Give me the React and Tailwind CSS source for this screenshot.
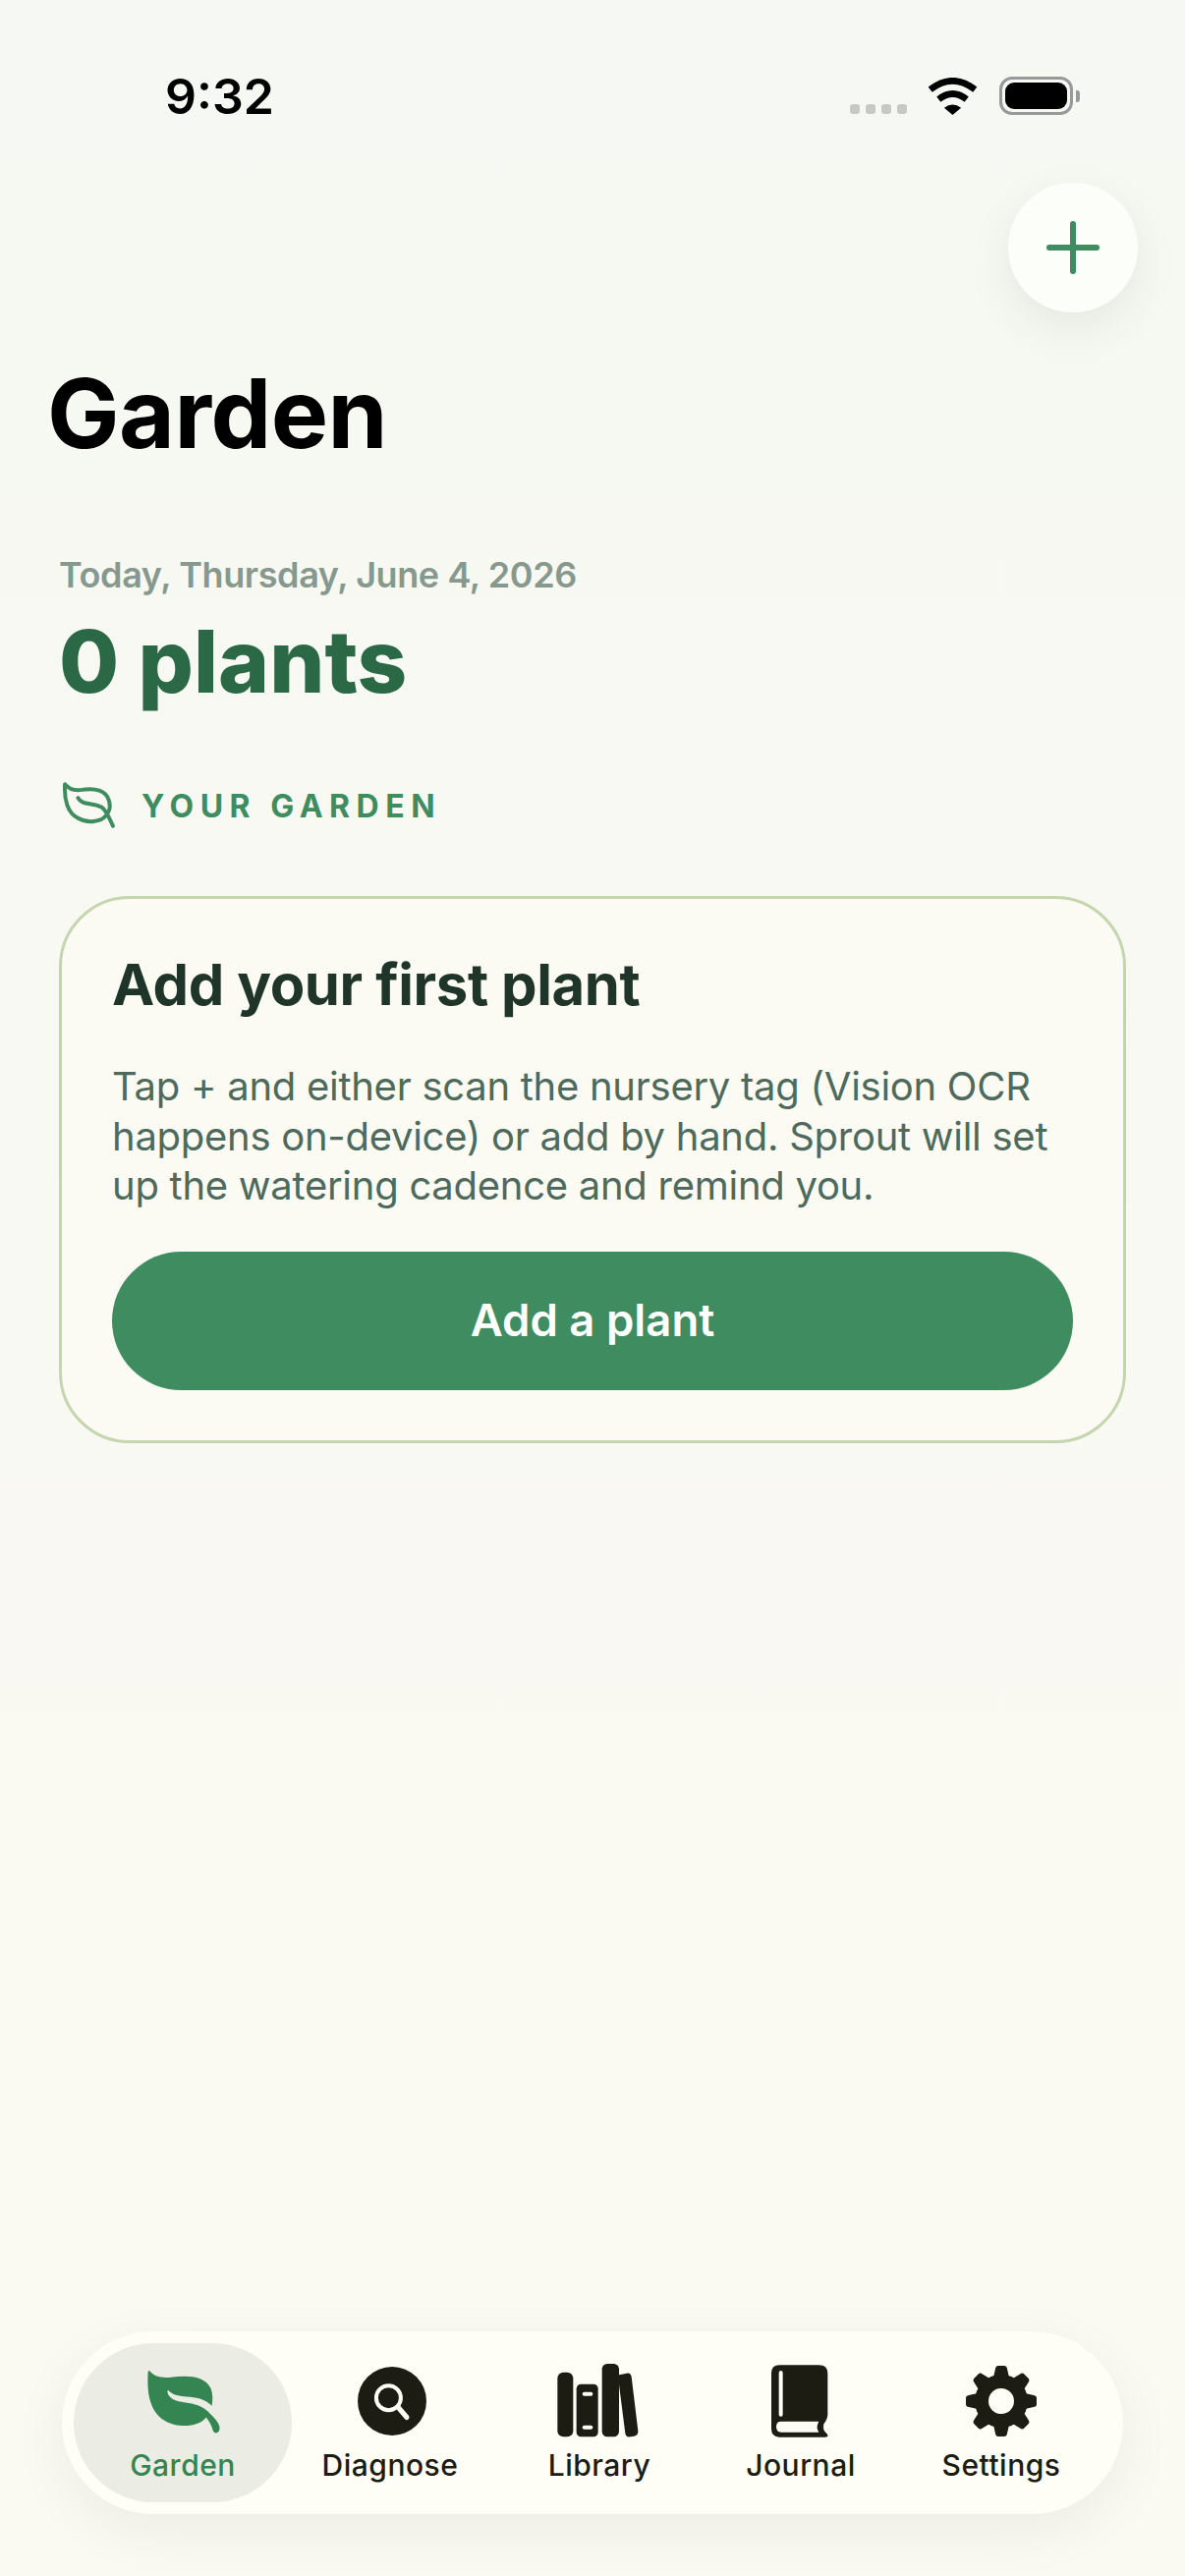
const tabs = [
    { label: "Garden", icon: <GardenIcon />, active: true },
    { label: "Diagnose", icon: <DiagnoseIcon /> },
    { label: "Library", icon: <LibraryIcon /> },
    { label: "Journal", icon: <JournalIcon /> },
    { label: "Settings", icon: <SettingsIcon /> },
];

function GardenIcon() {
    return (
        <svg viewBox="300 185 220 200" preserveAspectRatio="none" className="h-[67px] w-[79px]">
            <path
                fill="#358552"
                d="M315 192 C325 207 345 214 375 211 C420 205 470 205 488 245 C494 262 494 280 491 298 C470 275 445 272 420 270 C395 268 380 265 367 250 C362 255 368 272 385 280 C410 292 450 285 480 315 C495 332 515 350 513 368 C512 382 498 385 494 372 C490 355 483 345 475 333 C455 360 415 362 385 355 C330 340 305 290 310 200 C310 192 313 190 315 192 Z"
            />
        </svg>
    );
}

function DiagnoseIcon() {
    return (
        <svg viewBox="-35 -35 70 70" className="h-[70px] w-[70px] translate-x-[2px]">
            <circle r="35" fill="#1c1c12" />
            <circle cx="-3.6" cy="-3.3" r="12.5" fill="none" stroke="#fefef6" strokeWidth="4" />
            <path d="M6 6 L15 16.5" stroke="#fefef6" strokeWidth="5" strokeLinecap="round" />
        </svg>
    );
}

function LibraryIcon() {
    return (
        <svg viewBox="0 0 330 300" className="h-[100px] w-[110px] -translate-x-[5px]">
            <rect x="52" y="62" width="48" height="197" rx="18" fill="#1c1c12" />
            <rect x="110" y="98" width="66" height="161" rx="14" fill="#1c1c12" />
            <rect x="128" y="122" width="32" height="12" rx="6" fill="#fefef6" />
            <rect x="128" y="224" width="32" height="12" rx="6" fill="#fefef6" />
            <rect x="188" y="36" width="52" height="223" rx="16" fill="#1c1c12" />
            <path
                fill="#1c1c12"
                d="M240 70 L264 65 C272 64 277 68 278 76 L298 240 C299 250 295 255 286 257 L274 259 C265 260 260 256 259 248 L240 100 Z"
            />
        </svg>
    );
}

function JournalIcon() {
    return (
        <svg viewBox="0 0 300 270" className="h-[90px] w-[100px] translate-x-[5px]">
            <path
                fill="#1c1c12"
                d="M45 50 Q45 25 70 25 L190 25 Q217 25 217 50 L217 175 Q217 190 205 205 Q200 225 215 235 Q222 245 210 245 L70 245 Q45 245 45 220 Z"
            />
            <rect x="68" y="42" width="12" height="140" rx="6" fill="#fefef6" />
            <path
                fill="#fefef6"
                d="M75 197 L190 197 Q180 215 190 230 L75 230 Q60 230 60 213 Q60 197 75 197 Z"
            />
        </svg>
    );
}

function SettingsIcon() {
    return (
        <svg viewBox="-37 -37 74 74" className="h-[74px] w-[74px]">
            <circle r="27" fill="#1c1c12" />
            {[0, 45, 90, 135, 180, 225, 270, 315].map((deg) => (
                <path
                    key={deg}
                    transform={`rotate(${deg})`}
                    d="M-8 -24 L-6 -33 Q-5.5 -36 -3 -36 L3 -36 Q5.5 -36 6 -33 L8 -24 Z"
                    fill="#1c1c12"
                />
            ))}
            <circle r="13" fill="#fefef6" />
        </svg>
    );
}

function StatusBar() {
    return (
        <div className="flex h-[186px] items-start pt-[70px] pl-[168px] pr-[107px]">
            <span className="text-[50px] leading-[56px] font-semibold text-black">9:32</span>
            <div className="ml-auto flex items-start pt-[8px]">
                <div className="mt-[28px] flex gap-[6px]">
                    <span className="h-[10px] w-[10px] rounded-[3px] bg-[#c8c9c4]" />
                    <span className="h-[10px] w-[10px] rounded-[3px] bg-[#c8c9c4]" />
                    <span className="h-[10px] w-[10px] rounded-[3px] bg-[#c8c9c4]" />
                    <span className="h-[10px] w-[10px] rounded-[3px] bg-[#c8c9c4]" />
                </div>
                <svg viewBox="315 85 155 115" className="ml-[21px] mt-[1px] h-[38px] w-[52px]">
                    <path d="M322 122 Q391 68 460 122" fill="none" stroke="#000" strokeWidth="20" />
                    <path d="M348 152 Q391 118 434 152" fill="none" stroke="#000" strokeWidth="20" />
                    <path d="M365 178 Q391 158 417 178 L391 200 Z" fill="#000" />
                </svg>
                <div className="ml-[21px] flex items-center">
                    <div className="h-[39px] w-[75px] rounded-[13px] border-[3px] border-[#999] p-[3px]">
                        <div className="h-full w-full rounded-[9px] bg-black" />
                    </div>
                    <div className="ml-[3px] h-[12px] w-[4px] rounded-r-[3px] bg-[#999]" />
                </div>
            </div>
        </div>
    );
}

export default function App() {
    return (
        <div className="flex h-[2622px] w-[1206px] flex-col overflow-hidden bg-gradient-to-b from-[#f6f8f3] to-[#fbfaf2] font-[Inter,sans-serif]">
            <StatusBar />

            <div className="flex justify-end pr-[48px]">
                <button className="flex h-[132px] w-[132px] items-center justify-center rounded-full bg-[#fcfef9] shadow-[0_16px_50px_rgba(0,0,0,0.07)]">
                    <svg viewBox="0 0 54 54" className="h-[54px] w-[54px]">
                        <path d="M27 3 V51 M3 27 H51" stroke="#3e8c60" strokeWidth="6" strokeLinecap="round" />
                    </svg>
                </button>
            </div>

            <h1 className="mt-[48px] pl-[48px] text-[98px] leading-[110px] font-bold tracking-[-0.5px] text-black">Garden</h1>

            <div className="mt-[87px] px-[60px]">
                <p className="text-[36px] leading-[44px] font-semibold tracking-[-0.4px] text-[#87988d]">Today, Thursday, June 4, 2026</p>
                <p className="mt-[16px] text-[88.5px] leading-[100px] font-extrabold text-[#2a6846]">0 plants</p>

                <div className="mt-[66px] flex items-center">
                    <svg viewBox="0 0 240 190" className="h-[63px] w-[80px] -ml-[10px] -translate-y-[9px]">
                        <path
                            d="M48 55 C60 70 80 75 100 72 C140 65 175 75 183 105 C188 125 186 135 175 150 C160 172 115 175 90 160 C55 145 45 100 48 55 Z M88 97 C100 120 130 110 160 125 C175 135 185 160 195 183"
                            fill="none"
                            stroke="#3e8c60"
                            strokeWidth="12"
                            strokeLinecap="round"
                            strokeLinejoin="round"
                        />
                    </svg>
                    <span className="ml-[14px] text-[32px] font-bold tracking-[6.5px] text-[#3e8c60]">YOUR GARDEN</span>
                </div>

                <div className="mt-[60px] w-[1086px] rounded-[72px] border-[3px] border-[#c5d5b0] bg-[#fcfbf3] px-[51px] pt-[52px] pb-[51px]">
                    <h2 className="text-[58px] leading-[70px] font-bold tracking-[-0.4px] text-[#1f3529]">Add your first plant</h2>
                    <p className="mt-[44px] text-[40px] leading-[50.5px] tracking-[-0.27px] text-[#4d6a5c]">
                        Tap + and either scan the nursery tag (Vision OCR happens on-device) or add by hand. Sprout will set up the watering cadence and remind you.
                    </p>
                    <button className="mt-[41px] flex h-[141px] w-full items-center justify-center rounded-[71px] bg-[#3e8c60] text-[45.5px] font-semibold text-white">
                        Add a plant
                    </button>
                </div>
            </div>

            <div className="mx-[63px] mt-auto mb-[63px] grid h-[186px] grid-cols-[222px_200px_226px_184px_224px] items-center rounded-[93px] bg-[#fefef6] px-[12px] shadow-[0_16px_60px_rgba(0,0,0,0.06)]">
                {tabs.map((tab) => (
                    <div
                        key={tab.label}
                        className={`flex h-[162px] flex-col items-center justify-end rounded-[81px] pb-[19px] ${tab.active ? "bg-[#ebece3] text-[#358552]" : "text-[#1c1c12]"}`}
                    >
                        <div className="flex h-[80px] items-center justify-center">{tab.icon}</div>
                        <span className="mt-[6px] text-[30px] leading-[38px] font-medium tracking-[0.5px]">{tab.label}</span>
                    </div>
                ))}
            </div>
        </div>
    );
}
